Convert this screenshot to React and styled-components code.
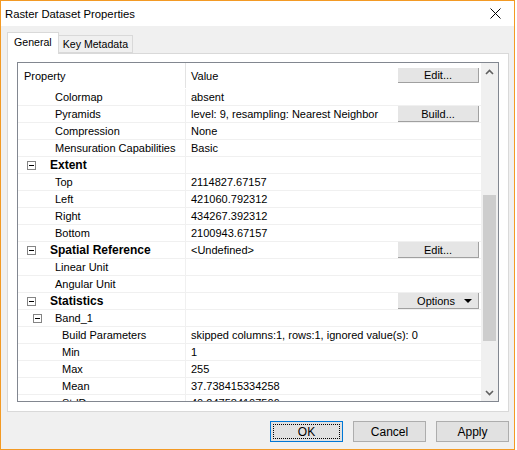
import React from 'react';
import styled, { createGlobalStyle } from 'styled-components';

const Global = createGlobalStyle`
  html, body { margin: 0; padding: 0; background: #fff; }
  body { font-family: "Liberation Sans", Arial, sans-serif; }
`;

const rows = [
  { name: 'Colormap', value: 'absent', kind: 'prop', level: 0 },
  { name: 'Pyramids', value: 'level: 9, resampling: Nearest Neighbor', kind: 'prop', level: 0, button: 'Build...' },
  { name: 'Compression', value: 'None', kind: 'prop', level: 0 },
  { name: 'Mensuration Capabilities', value: 'Basic', kind: 'prop', level: 0 },
  { name: 'Extent', value: '', kind: 'group' },
  { name: 'Top', value: '2114827.67157', kind: 'prop', level: 0 },
  { name: 'Left', value: '421060.792312', kind: 'prop', level: 0 },
  { name: 'Right', value: '434267.392312', kind: 'prop', level: 0 },
  { name: 'Bottom', value: '2100943.67157', kind: 'prop', level: 0 },
  { name: 'Spatial Reference', value: '<Undefined>', kind: 'group', button: 'Edit...' },
  { name: 'Linear Unit', value: '', kind: 'prop', level: 0 },
  { name: 'Angular Unit', value: '', kind: 'prop', level: 0 },
  { name: 'Statistics', value: '', kind: 'group', button: 'Options', dropdown: true },
  { name: 'Band_1', value: '', kind: 'sub' },
  { name: 'Build Parameters', value: 'skipped columns:1, rows:1, ignored value(s): 0', kind: 'prop', level: 1 },
  { name: 'Min', value: '1', kind: 'prop', level: 1 },
  { name: 'Max', value: '255', kind: 'prop', level: 1 },
  { name: 'Mean', value: '37.738415334258', kind: 'prop', level: 1 },
  { name: 'StdDev', value: '40.247584107506', kind: 'prop', level: 1 },
];

const Window = styled.div`
  width: 515px;
  height: 450px;
  box-sizing: border-box;
  border: 1px solid #f39a24;
  background: #f0f0f0;
  display: flex;
  flex-direction: column;
`;

const TitleBar = styled.div`
  height: 25px;
  background: #fff;
  display: flex;
  align-items: center;
  justify-content: space-between;
  padding: 0 4px 0 4px;
  font-size: 11.3px;
  color: #000;
`;

const Close = styled.div`
  width: 30px;
  height: 25px;
  display: flex;
  align-items: center;
  justify-content: center;
`;

const Body = styled.div`
  padding: 6px 5px 0 6px;
  display: flex;
  flex-direction: column;
`;

const Tabs = styled.div`
  display: flex;
  align-items: flex-end;
  height: 21px;
  position: relative;
  z-index: 1;
`;

const Tab = styled.div`
  box-sizing: border-box;
  height: ${p => (p.$active ? '22px' : '18px')};
  padding: 0 ${p => (p.$active ? '6px' : '4px')};
  margin-bottom: ${p => (p.$active ? '-1px' : '0')};
  background: ${p => (p.$active ? '#fff' : '#f0f0f0')};
  border: 1px solid #d9d9d9;
  border-bottom: ${p => (p.$active ? 'none' : '1px solid #d9d9d9')};
  border-left: ${p => (p.$first ? '1px solid #d9d9d9' : 'none')};
  font-size: 10.6px;
  line-height: ${p => (p.$active ? '19px' : '16px')};
  color: #000;
`;

const Panel = styled.div`
  width: 502px;
  height: 359px;
  box-sizing: border-box;
  background: #fff;
  border: 1px solid #d9d9d9;
  padding: 8px 9px 9px 9px;
`;

const Grid = styled.div`
  height: 340px;
  box-sizing: border-box;
  border: 1px solid #828790;
  display: flex;
  background: #fff;
`;

const Rows = styled.div`
  flex: 1;
  overflow: hidden;
  font-size: 11px;
  color: #000;
`;

const Row = styled.div`
  display: grid;
  grid-template-columns: 168px 1fr;
  height: ${p => (p.$header ? '26px' : '17px')};
  box-sizing: border-box;
  border-bottom: 1px solid ${p => (p.$header ? '#fff' : '#f0f0f0')};
`;

const NameCell = styled.div`
  display: flex;
  align-items: center;
  border-right: 1px solid ${p => (p.$header ? '#e3e3e3' : '#f0f0f0')};
  padding-left: ${p => p.$indent}px;
  font-weight: ${p => (p.$bold ? 'bold' : 'normal')};
  font-size: ${p => (p.$bold ? '12px' : '11px')};
  white-space: nowrap;
`;

const ValueCell = styled.div`
  display: flex;
  align-items: center;
  justify-content: space-between;
  padding: 0 2px 0 5px;
  white-space: nowrap;
`;

const Expander = styled.span`
  width: 9px;
  height: 9px;
  box-sizing: border-box;
  border: 1px solid #848484;
  margin-right: ${p => p.$gap}px;
  display: flex;
  align-items: center;
  justify-content: center;
  &::after {
    content: '';
    width: 5px;
    height: 1px;
    background: #000;
  }
`;

const CellButton = styled.button`
  width: 81px;
  height: ${p => (p.$header ? '15px' : '16px')};
  box-sizing: border-box;
  margin: 0;
  padding: 0 ${p => (p.$dropdown ? '6px' : '0')} 0 0;
  background: #e5e5e5;
  border: none;
  border-bottom: 1px solid #a0a0a0;
  border-right: 1px solid #a0a0a0;
  font-family: inherit;
  font-size: 11px;
  color: #000;
  display: flex;
  align-items: center;
  justify-content: ${p => (p.$dropdown ? 'flex-end' : 'center')};
  gap: 9px;
`;

const Scrollbar = styled.div`
  width: 17px;
  background: #f0f0f0;
  display: flex;
  flex-direction: column;
`;

const ArrowButton = styled.div`
  height: 17px;
  display: flex;
  align-items: center;
  justify-content: center;
`;

const Track = styled.div`
  flex: 1;
  display: flex;
  flex-direction: column;
  padding: 0 2px;
`;

const Thumb = styled.div`
  margin-top: ${p => p.$top}px;
  height: ${p => p.$height}px;
  background: #cdcdcd;
`;

const Footer = styled.div`
  display: flex;
  justify-content: flex-end;
  gap: 10px;
  padding: 9px 0 0 0;
  width: 502px;
`;

const DialogButton = styled.button`
  width: 73px;
  height: 21px;
  box-sizing: border-box;
  margin: 0;
  padding: 0;
  background: #e1e1e1;
  border: 1px solid ${p => (p.$default ? '#0078d7' : '#adadad')};
  font-family: "Liberation Sans", Arial, sans-serif;
  font-size: 12px;
  color: #000;
  position: relative;
  ${p => p.$default && `
    &::after {
      content: '';
      position: absolute;
      inset: 2px;
      border: 1px dotted #000;
    }
  `}
`;

const Chevron = ({ down }) => (
  <svg width="9" height="6" viewBox="0 0 9 6">
    <polyline
      points={down ? '1,1 4.5,4.5 8,1' : '1,5 4.5,1.5 8,5'}
      fill="none"
      stroke="#606060"
      strokeWidth="1.6"
    />
  </svg>
);

const indentFor = row => {
  if (row.kind === 'group') return 9;
  if (row.kind === 'sub') return 15;
  return row.level ? 44 : 37;
};

export default function App() {
  return (
    <>
      <Global />
      <Window>
        <TitleBar>
          <span>Raster Dataset Properties</span>
          <Close>
            <svg width="11" height="11" viewBox="0 0 11 11">
              <path d="M0.5 0.5 L10.5 10.5 M10.5 0.5 L0.5 10.5" stroke="#000" strokeWidth="1" />
            </svg>
          </Close>
        </TitleBar>
        <Body>
          <Tabs>
            <Tab $active $first>General</Tab>
            <Tab>Key Metadata</Tab>
          </Tabs>
          <Panel>
            <Grid>
              <Rows>
                <Row $header>
                  <NameCell $header $indent={6}>Property</NameCell>
                  <ValueCell>
                    <span>Value</span>
                    <CellButton $header>Edit...</CellButton>
                  </ValueCell>
                </Row>
                {rows.map(row => (
                  <Row key={row.name}>
                    <NameCell $indent={indentFor(row)} $bold={row.kind === 'group'}>
                      {row.kind === 'group' && <Expander $gap={14} />}
                      {row.kind === 'sub' && <Expander $gap={13} />}
                      {row.name}
                    </NameCell>
                    <ValueCell>
                      <span>{row.value}</span>
                      {row.button && (
                        <CellButton $dropdown={row.dropdown}>
                          {row.button}
                          {row.dropdown && (
                            <svg width="8" height="4" viewBox="0 0 8 4">
                              <polygon points="0,0 8,0 4,4" fill="#000" />
                            </svg>
                          )}
                        </CellButton>
                      )}
                    </ValueCell>
                  </Row>
                ))}
              </Rows>
              <Scrollbar>
                <ArrowButton><Chevron /></ArrowButton>
                <Track>
                  <Thumb $top={115} $height={146} />
                </Track>
                <ArrowButton><Chevron down /></ArrowButton>
              </Scrollbar>
            </Grid>
          </Panel>
          <Footer>
            <DialogButton $default>OK</DialogButton>
            <DialogButton>Cancel</DialogButton>
            <DialogButton>Apply</DialogButton>
          </Footer>
        </Body>
      </Window>
    </>
  );
}
